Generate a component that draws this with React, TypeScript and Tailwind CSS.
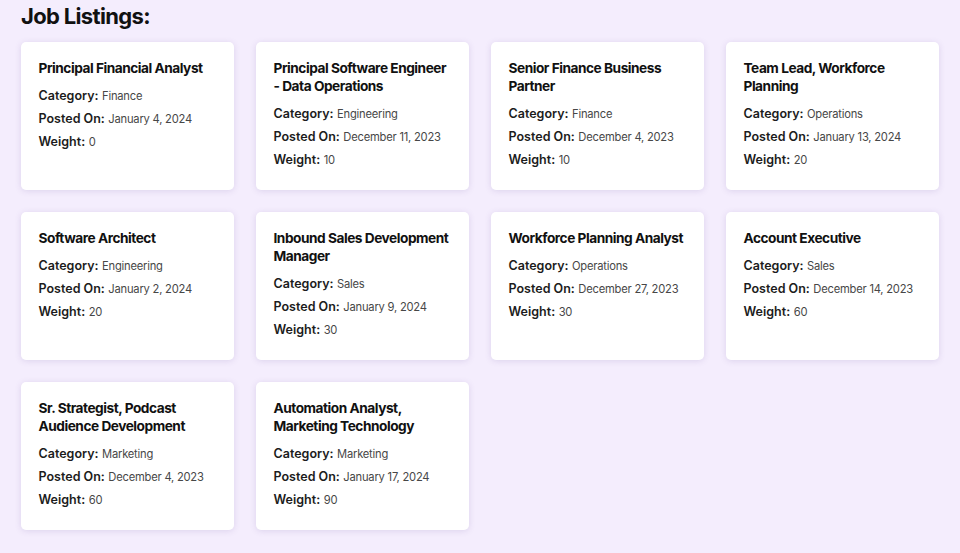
import React from "react";

type Job = { title: string; category: string; posted: string; weight: number };

const jobs: Job[] = [
  { title: "Principal Financial Analyst", category: "Finance", posted: "January 4, 2024", weight: 0 },
  { title: "Principal Software Engineer - Data Operations", category: "Engineering", posted: "December 11, 2023", weight: 10 },
  { title: "Senior Finance Business Partner", category: "Finance", posted: "December 4, 2023", weight: 10 },
  { title: "Team Lead, Workforce Planning", category: "Operations", posted: "January 13, 2024", weight: 20 },
  { title: "Software Architect", category: "Engineering", posted: "January 2, 2024", weight: 20 },
  { title: "Inbound Sales Development Manager", category: "Sales", posted: "January 9, 2024", weight: 30 },
  { title: "Workforce Planning Analyst", category: "Operations", posted: "December 27, 2023", weight: 30 },
  { title: "Account Executive", category: "Sales", posted: "December 14, 2023", weight: 60 },
  { title: "Sr. Strategist, Podcast Audience Development", category: "Marketing", posted: "December 4, 2023", weight: 60 },
  { title: "Automation Analyst, Marketing Technology", category: "Marketing", posted: "January 17, 2024", weight: 90 },
];

function Row({ label, value }: { label: string; value: string }) {
  return (
    <p className="whitespace-nowrap text-[12.5px] leading-[23px] text-[#1c1c1c]">
      <span className="font-semibold leading-none">{label}:</span>{" "}
      <span className="text-[11.2px] font-normal leading-none tracking-[-0.02em] text-[#474747]">{value}</span>
    </p>
  );
}

export default function App() {
  return (
    <div
      className="min-h-[553px] w-full bg-[#f4edfd] px-[21px] pb-[22px]"
      style={{ fontFamily: "Inter, 'Noto Sans', sans-serif" }}
    >
      <h2 className="pt-[2px] text-[22px] font-bold leading-[28px] tracking-[-0.03em] text-[#111]">
        Job Listings:
      </h2>
      <div className="mt-[12px] grid grid-cols-4 gap-[22px]">
        {jobs.map((j) => (
          <div
            key={j.title}
            className="h-[148px] rounded-[5px] bg-white pl-[17.5px] pr-[17px] pt-[17px] shadow-[0_1px_6px_rgba(90,60,140,0.15)]"
          >
            <h3 className="mb-[7px] text-[13.7px] font-bold leading-[18px] tracking-[-0.035em] text-[#111]">
              {j.title}
            </h3>
            <Row label="Category" value={j.category} />
            <Row label="Posted On" value={j.posted} />
            <Row label="Weight" value={String(j.weight)} />
          </div>
        ))}
      </div>
    </div>
  );
}
